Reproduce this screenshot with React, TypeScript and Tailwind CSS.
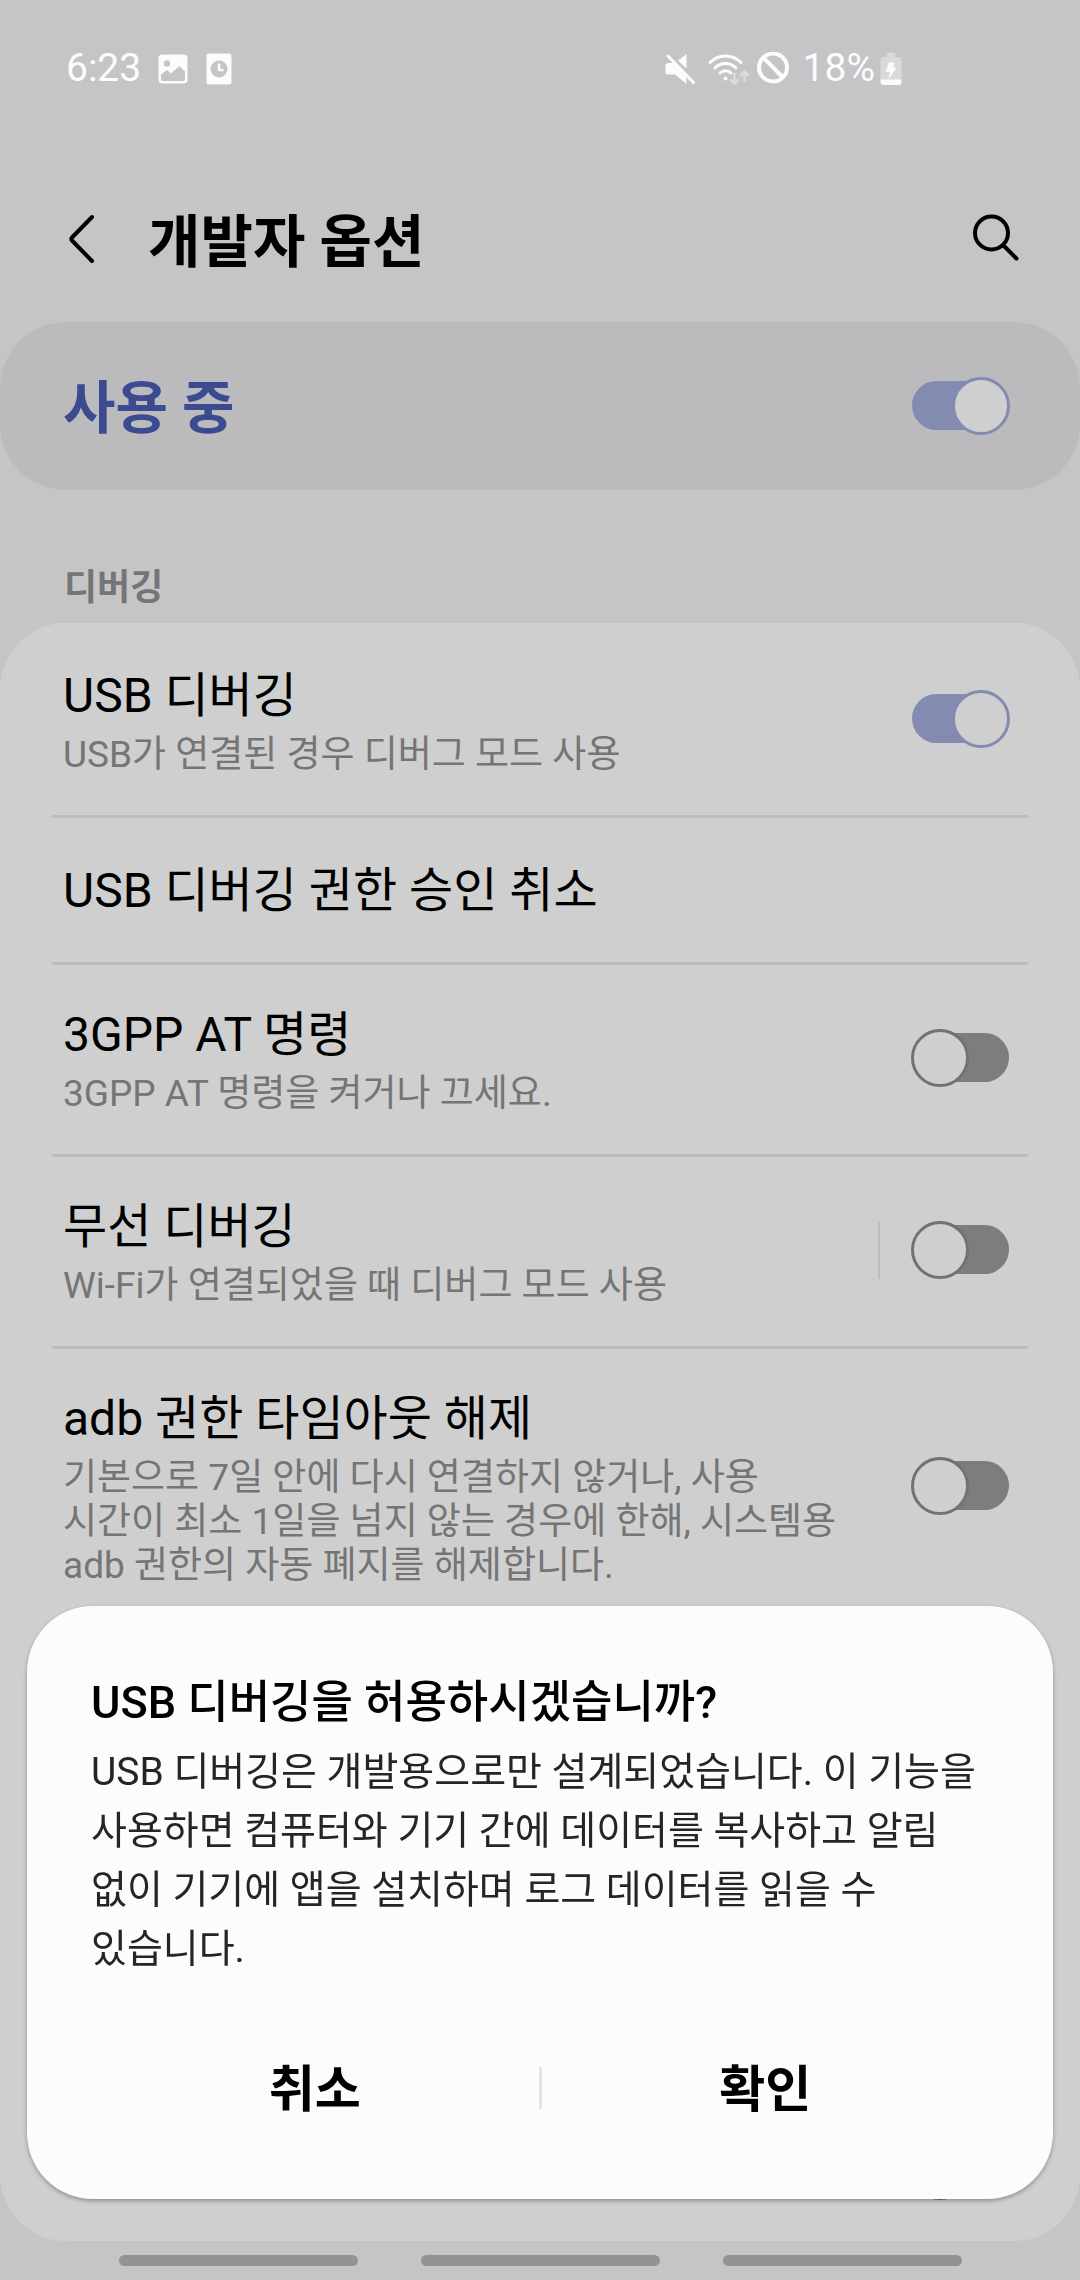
import { useState } from 'react';

type Option = {
  title: string;
  description?: string;
  toggle?: boolean;
  enabled?: boolean;
  divided?: boolean;
};

const options: Option[] = [
  {
    title: 'USB 디버깅',
    description: 'USB가 연결된 경우 디버그 모드 사용',
    toggle: true,
    enabled: true
  },
  {
    title: 'USB 디버깅 권한 승인 취소'
  },
  {
    title: '3GPP AT 명령',
    description: '3GPP AT 명령을 켜거나 끄세요.',
    toggle: true
  },
  {
    title: '무선 디버깅',
    description: 'Wi-Fi가 연결되었을 때 디버그 모드 사용',
    toggle: true,
    divided: true
  },
  {
    title: 'adb 권한 타임아웃 해제',
    description:
      '기본으로 7일 안에 다시 연결하지 않거나, 사용 시간이 최소 1일을 넘지 않는 경우에 한해, 시스템용 adb 권한의 자동 폐지를 해제합니다.',
    toggle: true
  }
];

function Switch({ id, label, initial = false }: { id: string; label?: string; initial?: boolean }) {
  const [on, setOn] = useState(initial);

  return (
    <input
      id={id}
      type="checkbox"
      aria-label={label}
      checked={on}
      onChange={() => setOn(!on)}
      className="relative h-[58px] w-[99px] shrink-0 appearance-none before:absolute before:inset-x-px before:top-1 before:h-[49px] before:rounded-full before:bg-[#7d7d7d] before:content-[''] after:absolute after:left-0 after:top-0 after:h-[58px] after:w-[58px] after:rounded-full after:border-3 after:border-[#727272] after:bg-[#cfcfcf] after:content-[''] checked:before:bg-[#838bb1] checked:after:left-auto checked:after:right-0 checked:after:border-[#838bb1]"
    />
  );
}

function StatusBar() {
  return (
    <div className="flex h-[137px] items-center justify-between pl-[66px] pr-[178px] text-[39px] leading-none text-[#fcfcfc]">
      <div className="flex items-center">
        <span>6:23</span>
        {/* Picture */}
        <svg className="ml-[17px] h-[30px] w-[30px]" viewBox="0 0 30 30">
          <rect x="0.5" y="0.5" width="29" height="29" rx="4" fill="#fcfcfc" />
          <circle cx="9" cy="9.5" r="3.2" fill="#c5c5c7" />
          <path d="M3 20.5L9 16l4 3.500L21.500 12l5.500 5.500V25a2 2 0 0 1-2 2H5a2 2 0 0 1-2-2z" fill="#c5c5c7" />
        </svg>
        {/* Scheduled document */}
        <svg className="ml-[18px] h-[32px] w-[26px]" viewBox="0 0 26 32">
          <rect x="0.5" y="0.5" width="25" height="31" rx="2.500" fill="#fcfcfc" />
          <circle cx="13" cy="16" r="8.500" fill="#c5c5c7" />
          <path d="M13 10.500V17h4.500" fill="none" stroke="#fcfcfc" strokeWidth="2.600" />
        </svg>
      </div>
      <div className="flex items-center">
        {/* Muted */}
        <svg className="h-[32px] w-[30px]" viewBox="0 0 30 32" fill="#fcfcfc">
          <path d="M21.500 1v14.500L13 7.500z" />
          <path d="M3 10h6l12.500 13V31L10 21.500H3a2.500 2.500 0 0 1-2.500-2.500v-6.500A2.500 2.500 0 0 1 3 10z" />
          <path d="M3 3l25.500 26.500" stroke="#fcfcfc" strokeWidth="3" strokeLinecap="round" />
        </svg>
        {/* Wi-Fi with traffic arrows */}
        <svg className="ml-[13px] h-[32px] w-[41px]" viewBox="0 0 41 32" fill="none" strokeLinecap="round">
          <g stroke="#fcfcfc" strokeWidth="3">
            <path d="M2 9.500a21.500 21.500 0 0 1 31 0" />
            <path d="M7 15a14.500 14.500 0 0 1 21 0" />
            <path d="M12 20a8 8 0 0 1 11 0" />
          </g>
          <circle cx="17.500" cy="25.500" r="2" fill="#fcfcfc" />
          <g stroke="#dcdcdd" strokeWidth="2.500" strokeLinejoin="round">
            <path d="M26.500 21v9M23 27l3.500 3.500L30 27" />
            <path d="M36.500 28V18.500M33 22l3.500-3.500L40 22" />
          </g>
        </svg>
        {/* Do not disturb */}
        <svg className="ml-[7px] h-[34px] w-[34px]" viewBox="0 0 34 34" fill="none" stroke="#fcfcfc" strokeWidth="4">
          <circle cx="17" cy="15.500" r="14" />
          <path d="M7 5.500l20 20" />
        </svg>
        <span className="ml-[13px]">18%</span>
        {/* Charging battery */}
        <svg className="ml-[5px] h-[34px] w-[22px]" viewBox="0 0 22 34">
          <path d="M6.500 5V2a1.500 1.500 0 0 1 1.500-1.500h6A1.500 1.500 0 0 1 15.500 2v3H19a2.500 2.500 0 0 1 2.500 2.500V28H.5V7.500A2.500 2.500 0 0 1 3 5z" fill="#d9d9da" />
          <path d="M.5 27.500h21V30a3 3 0 0 1-3 3h-15a3 3 0 0 1-3-3z" fill="#fcfcfc" />
          <path d="M9 10.500h5.500L13 15.500h4L8.500 27l1.500-7H5.500z" fill="#fcfcfc" />
        </svg>
      </div>
    </div>
  );
}

function OptionRow({ option, id }: { option: Option; id: string }) {
  return (
    <li className="group px-[52px]">
      <div className="flex min-h-[147px] items-center border-t-3 border-[#bdbdbd] py-[38px] pl-[11px] pr-[18px] group-first:border-[#cfcfcf]">
        <div className="flex-1">
          <label htmlFor={option.toggle ? id : undefined} className="block text-[48px] leading-[63px] text-black">
            {option.title}
          </label>
          {option.description && (
            <p className="mt-[6px] text-[37px] leading-[44px] text-[#757575]">{option.description}</p>
          )}
        </div>
        {option.toggle && (
          <div className="flex items-center pb-1">
            {option.divided && <div className="h-[58px] w-[2px] bg-[#bdbdbd]" />}
            <div className={option.divided ? 'ml-[31px] flex' : 'ml-[56px] flex'}>
              <Switch id={id} initial={option.enabled} />
            </div>
          </div>
        )}
      </div>
    </li>
  );
}

export default function App() {
  return (
    <main className="flex min-h-screen flex-col bg-[#c5c5c7] font-[Roboto,'Noto_Sans_CJK_KR',sans-serif] break-keep">
      <StatusBar />

      {/* Title bar */}
      <header className="mt-[21px] flex h-[164px] items-center pl-[66px] pr-[60px]">
        <button aria-label="뒤로" className="shrink-0">
          <svg className="h-[52px] w-[30px]" viewBox="0 0 30 52" fill="none" stroke="#000" strokeWidth="4" strokeLinecap="round" strokeLinejoin="round">
            <path d="M26 3L6 23.500a2 2 0 0 0 0 3L26 47" />
          </svg>
        </button>
        <h1 className="ml-[52px] flex-1 pt-[5px] text-[57px] font-bold leading-[80px] text-black">개발자 옵션</h1>
        <button aria-label="검색" className="shrink-0">
          <svg className="h-[52px] w-[48px]" viewBox="0 0 48 52" fill="none" stroke="#000" strokeWidth="4" strokeLinecap="round">
            <circle cx="19.500" cy="19" r="16.500" />
            <path d="M32 32l12.500 12.500" />
          </svg>
        </button>
      </header>

      <section className="flex h-[168px] items-center rounded-[66px] bg-[#bbbbbd] pl-[63px] pr-[70px]">
        <label htmlFor="developer-options" className="flex-1 pt-[5px] text-[57px] font-bold leading-[80px] text-[#3c4a92]">
          사용 중
        </label>
        <Switch id="developer-options" initial />
      </section>

      <h2 className="px-[64px] pb-[11px] pt-[74px] text-[36px] font-bold leading-[48px] text-[#757575]">디버깅</h2>

      {/* Option list */}
      <section className="flex flex-1 flex-col justify-between rounded-[66px] bg-[#cfcfcf]">
        <ul>
          {options.map((option, i) => (
            <OptionRow key={option.title} option={option} id={`option-${i}`} />
          ))}
        </ul>
        <div className="flex justify-end pb-[41px] pr-[70px]">
          <Switch id="more-option" label="추가 옵션" />
        </div>
      </section>

      {/* Gesture bars */}
      <nav className="flex h-[39px] items-center justify-center gap-[63px]">
        <button aria-label="최근 앱" className="h-[11px] w-[239px] rounded-full bg-[#939393]" />
        <button aria-label="홈" className="h-[11px] w-[239px] rounded-full bg-[#939393]" />
        <button aria-label="이전" className="h-[11px] w-[239px] rounded-full bg-[#939393]" />
      </nav>

      {/* Confirmation dialog */}
      <div className="fixed inset-0 flex items-end px-[27px] pb-[81px]">
        <div
          role="dialog"
          aria-modal="true"
          aria-labelledby="dialog-title"
          className="w-full rounded-[66px] bg-[#fcfcfc] pb-[54px] pt-[65px] shadow-[0_2px_4px_rgba(0,0,0,0.3)]"
        >
          <h2 id="dialog-title" className="px-[64px] text-[45px] font-medium leading-[64px] text-black">
            USB 디버깅을 허용하시겠습니까?
          </h2>
          <p className="px-[64px] pt-[8px] text-[39px] leading-[59px] text-[#252525]">
            USB 디버깅은 개발용으로만 설계되었습니다. 이 기능을 사용하면 컴퓨터와 기기 간에 데이터를 복사하고 알림 없이 기기에 앱을 설치하며 로그 데이터를 읽을 수 있습니다.
          </p>
          <div className="mt-[52px] flex items-center px-[64px] text-[50px] font-bold leading-[109px] text-black">
            <button className="flex-1 pt-[5px]">취소</button>
            <div className="h-[42px] w-[3px] bg-[#e4e4e4]" />
            <button className="flex-1 pt-[5px]">확인</button>
          </div>
        </div>
      </div>
    </main>
  );
}
